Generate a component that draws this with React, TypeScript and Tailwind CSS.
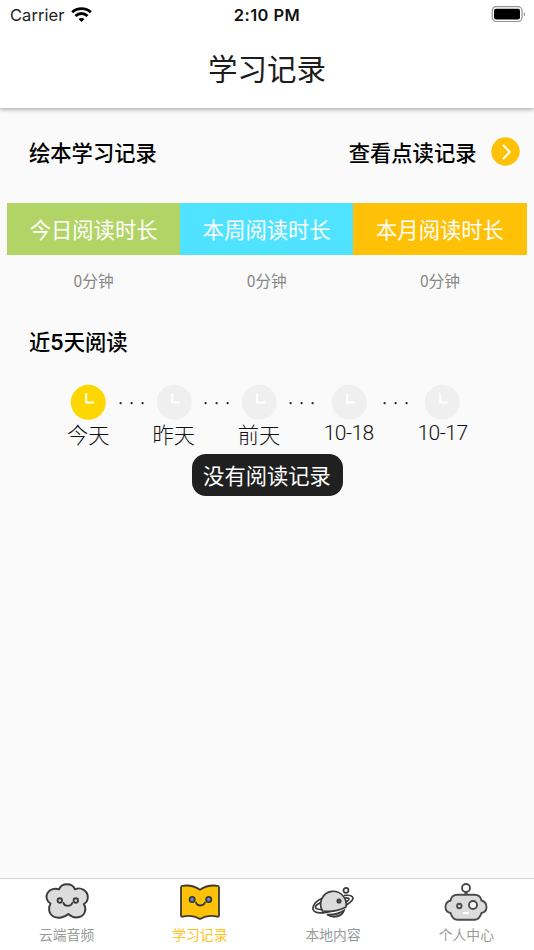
import React from "react";

const cjk = "font-['Noto_Sans_CJK_SC',sans-serif]";

function StatusBar() {
  return (
    <div className="relative flex h-[30px] items-center justify-between pl-[10px] pr-[8px] font-['Inter',sans-serif] text-black">
      <div className="flex items-center gap-[7px]">
        <span className="text-[16.5px] leading-[30px] tracking-[0.05px] text-[#222]">Carrier</span>
        <svg width="21" height="16" viewBox="0 0 21 16" fill="none" stroke="#000" strokeWidth="2.9">
          <path d="M1.2 5.2C6.3.4 14.7.4 19.8 5.2" />
          <path d="M4.5 9C8 5.700 13 5.700 16.500 9" />
          <path d="M7.5 12L10.500 15L13.500 12C11.800 10.600 9.200 10.600 7.500 12Z" fill="#000" stroke="none" />
        </svg>
      </div>
      <span className="absolute inset-x-0 text-center text-[16.5px] font-semibold leading-[30px] tracking-[0.45px] text-[#111]">2:10 PM</span>
      <svg className="-mt-[2px]" width="35" height="16" viewBox="0 0 35 16">
        <rect x="1.2" y=".7" width="29.8" height="14.8" rx="4" fill="#fff" stroke="#929292" strokeWidth="1.2" />
        <rect x="3" y="2.8" width="26" height="10.6" rx="1.8" fill="#000" />
        <path d="M32.8 6V10.4Q34 9.7 34 8.2T32.8 6Z" fill="#888" />
      </svg>
    </div>
  );
}

function Stat({ title, color }: { title: string; color: string }) {
  return (
    <div className="flex-1 text-center">
      <div className={`${color} h-[52.5px] text-[21.3px] leading-[51px] text-white`}>{title}</div>
      <div className="h-[52px] text-[15.7px] leading-[52px] text-[#888]">0分钟</div>
    </div>
  );
}

function Day({ label, active = false, numeric = false }: { label: string; active?: boolean; numeric?: boolean }) {
  return (
    <div className={`flex flex-col items-center ${numeric ? "w-[51px]" : "w-[42.6px]"}`}>
      <svg width="36" height="36" viewBox="0 0 36 36">
        <circle cx="18.300" cy="18.300" r="17.500" fill={active ? "#ffd700" : "#efefef"} />
        <path d="M16.200 9V18.500H24" fill="none" stroke="#fff" strokeWidth="1.9" />
      </svg>
      <span
        className={
          numeric
            ? "whitespace-nowrap font-['Roboto',sans-serif] text-[21px] font-light leading-[27px] tracking-[-0.5px] text-[#111]"
            : "whitespace-nowrap text-[21.3px] font-light leading-[28px] text-[#111]"
        }
      >
        {label}
      </span>
    </div>
  );
}

function Dots() {
  return (
    <svg width="42.8" height="36" viewBox="0 0 42.8 36" fill="#222">
      <circle cx="10.6" cy="19.2" r="1.1" />
      <circle cx="21.6" cy="19.2" r="1.1" />
      <circle cx="32.6" cy="19.2" r="1.1" />
    </svg>
  );
}

function CloudIcon() {
  return (
    <svg width="46" height="40" viewBox="0 0 46 40" fill="none" stroke="#3b3b3b" strokeWidth="1.9">
      <path d="M15 6.300C17.500-.5 28.500-.5 31 6.300C37 3.500 44 8 43.800 14.500C43.700 17.500 42.300 19.800 39.800 21C43 26 41 32.500 35.500 34C31 35.200 27.500 34 24.300 31C20.500 34.500 14 36 9.500 33.500C4.500 30.500 4 25 6.500 20.500C2.500 18.500 1.500 13.500 3.500 10C6 6 11 5 15 6.300Z" fill="#dcdcdc" strokeLinejoin="round" />
      <circle cx="15.800" cy="17.500" r="2.200" /><circle cx="31.800" cy="17.500" r="2.200" />
      <path d="M19.500 20C20.500 23.800 27 23.800 28.300 20" strokeLinecap="round" />
    </svg>
  );
}

function BookIcon() {
  return (
    <svg width="46" height="40" viewBox="0 0 46 40" fill="none" stroke="#3b3b33" strokeWidth="1.8" strokeLinejoin="round">
      <path d="M23 6.800C17.500 3 11 2 5.500 2.800Q4 3 4 4.500V32.500Q4 34 5.500 33.700C12 32 18 33 23 36C28 33 34 32 40.500 33.700Q42 34 42 32.500V4.500Q42 3 40.500 2.800C35 2 28.500 3 23 6.800Z" fill="#ffc20a" />
      <circle cx="15.200" cy="16.500" r="2.600" fill="#6689ef" /><circle cx="31.700" cy="16.500" r="2.600" fill="#6689ef" />
      <path d="M19 19.500C20 23.500 26.500 23.500 28 19.500" strokeLinecap="round" />
    </svg>
  );
}

function PlanetIcon() {
  return (
    <svg width="46" height="40" viewBox="0 0 46 40" fill="none" stroke="#3b3b3b" strokeWidth="1.7">
      <path d="M12 15.500C3 19 .5 27 5.500 29C10 31 21 29 30 25.500C39 21.500 44.500 16.500 42.500 14C41 12 37.500 12 34 12.500" />
      <path d="M11 19.500C5 22 4 25 7.500 26C12 27.300 21 26.500 29 22.800C36 19.500 40.500 16.500 38.500 15.200C37.500 14.700 36 14.800 35 15" />
      <path d="M12.500 28C8 20 12 9.500 22 8.300C31 7.800 37.500 15.500 36 24C28 28 19 29 12.500 28Z" fill="#dcdcdc" />
      <circle cx="29" cy="18" r="1.700" fill="#777" /><circle cx="36" cy="7.300" r="2.500" fill="#fff" />
      <path d="M17 31.500C23 32 29 30.500 34 27.500C32 33.500 24 36 17 31.500Z" fill="#999" />
    </svg>
  );
}

function RobotIcon() {
  return (
    <svg width="46" height="40" viewBox="0 0 46 40" fill="none" stroke="#4b4b4b" strokeWidth="1.900">
      <path d="M23 12V8.500" strokeWidth="3" />
      <circle cx="23" cy="5" r="4" fill="#fff" />
      <path d="M14.500 11.700H31.500Q37.500 11.700 38.500 17.500C45.200 19.500 45.200 28.500 38.500 30Q36.500 36.700 31.500 36.700H14.500Q9.500 36.700 7.500 30C.8 28.500.8 19.500 7.500 17.500Q8.500 11.700 14.500 11.700Z" fill="#dcdcdc" />
      <circle cx="16.300" cy="23" r="2.200" /><circle cx="30" cy="22" r="4" fill="#fff" />
      <path d="M20 30H26" stroke="#fff" strokeWidth="2" />
    </svg>
  );
}

function Tab({ label, active = false, children }: { label: string; active?: boolean; children: React.ReactNode }) {
  return (
    <div className="flex flex-1 flex-col items-center pt-[4px]">
      {children}
      <span className={`mt-px text-[13.8px] leading-[20px] ${active ? "text-[#ffc319]" : "text-[#999]"}`}>{label}</span>
    </div>
  );
}

export default function App() {
  return (
    <div className={`flex h-[950px] w-[534px] flex-col overflow-hidden bg-[#fafafa] ${cjk}`}>
      <header className="z-10 h-[108px] shrink-0 bg-white shadow-[0_1px_5px_rgba(0,0,0,0.38)]">
        <StatusBar />
        <h1 className="text-center text-[29.5px] leading-[75px] text-[#1c1c1c]">学习记录</h1>
      </header>

      <main className="flex-1">
        <div className="flex h-[94.5px] items-start justify-between pl-[29px] pr-[14.5px] pt-[28.5px] text-[21.3px] font-medium leading-[30px] text-black">
          <h2>绘本学习记录</h2>
          <div className="flex items-center gap-[14px]">
            <span>查看点读记录</span>
            <svg width="29" height="29" viewBox="0 0 29 29" fill="none">
              <circle cx="14.500" cy="14.500" r="14.200" fill="#ffc107" />
              <path d="M12 8L18.800 15L12 22" stroke="#fff" strokeWidth="1.900" />
            </svg>
          </div>
        </div>

        <section className="flex pl-[7px] pr-[7.5px]">
          <Stat title="今日阅读时长" color="bg-[#b2d466]" />
          <Stat title="本周阅读时长" color="bg-[#50e3ff]" />
          <Stat title="本月阅读时长" color="bg-[#ffc107]" />
        </section>

        <h2 className="mt-[20px] pl-[29px] font-['Inter','Noto_Sans_CJK_SC',sans-serif] text-[21.3px] font-medium leading-[30px] text-black">
          近<span className="font-semibold">5</span>天阅读
        </h2>

        <section className="mt-[27px] flex h-[66px] items-start justify-center pl-px">
          <Day label="今天" active />
          <Dots />
          <Day label="昨天" />
          <Dots />
          <Day label="前天" />
          <Dots />
          <Day label="10-18" numeric />
          <Dots />
          <Day label="10-17" numeric />
        </section>

        <div className="mx-auto mt-[4px] h-[41.5px] w-[151px] rounded-[14px] bg-[#202020] text-center text-[21.3px] leading-[42px] text-white">没有阅读记录</div>
      </main>

      <nav className="flex h-[72px] shrink-0 border-t-[1.5px] border-[#d2d2d2] bg-white pr-px">
        <Tab label="云端音频"><CloudIcon /></Tab>
        <Tab label="学习记录" active><BookIcon /></Tab>
        <Tab label="本地内容"><PlanetIcon /></Tab>
        <Tab label="个人中心"><RobotIcon /></Tab>
      </nav>
    </div>
  );
}
